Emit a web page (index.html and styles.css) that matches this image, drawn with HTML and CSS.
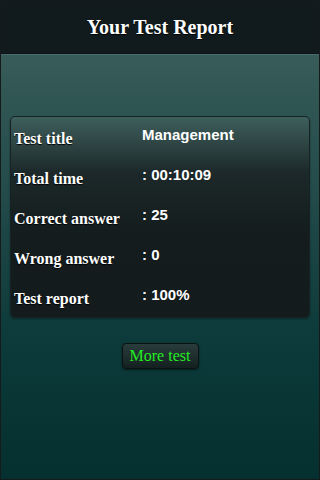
FILE: index.html
```html
<!DOCTYPE html>
<html lang="en">
<head>
    <meta charset="UTF-8">
    <meta name="viewport" content="width=device-width, initial-scale=1.0">
    <title>Your Test Report</title>
    <link rel="stylesheet" href="styles.css">
</head>
<body>
    <div class="page">
        <div class="header">
            <h1>Your Test Report</h1>
        </div>

        <div class="content">
            <div class="report">
                <div class="row">
                    <span class="label">Test title</span>
                    <span class="value">Management</span>
                </div>
                <div class="row">
                    <span class="label">Total time</span>
                    <span class="value">: 00:10:09</span>
                </div>
                <div class="row">
                    <span class="label">Correct answer</span>
                    <span class="value">: 25</span>
                </div>
                <div class="row">
                    <span class="label">Wrong answer</span>
                    <span class="value">: 0</span>
                </div>
                <div class="row">
                    <span class="label">Test report</span>
                    <span class="value">: 100%</span>
                </div>
            </div>

            <div class="actions">
                <button type="button" class="more">More test</button>
            </div>
        </div>
    </div>
</body>
</html>
```

FILE: styles.css
```css
html, body {
    margin: 0;
    padding: 0;
    height: 100%;
}
body {
    background-color: #111;
}
.page {
    box-sizing: border-box;
    height: 480px;
    border: 1px solid #151b1c;
    display: flex;
    flex-direction: column;
    background: linear-gradient(#3f625f, #0d3a3a 70%, #04302f);
}
.header {
    height: 52px;
    background-color: #111b1d;
    border-bottom: 1px solid #0c1213;
    display: flex;
    align-items: center;
    justify-content: center;
}
.header h1 {
    margin: 0;
    font-family: "Liberation Serif", "Times New Roman", serif;
    font-size: 20px;
    font-weight: bold;
    color: #fff;
    text-shadow: 0 1px 1px #000;
}
.content {
    flex: 1;
    padding: 61px 9px 0;
    border-top: 1px solid #4a6e6b;
}
.report {
    border: 1px solid #162325;
    border-radius: 5px;
    background: linear-gradient(#3e5f5c, #1c2829 28%, #141c1d 60%, #141b1c);
    box-shadow: 0 1px 2px rgba(0, 0, 0, 0.4);
}
.row {
    display: grid;
    grid-template-columns: 128px 1fr;
    align-items: center;
    height: 40px;
    padding-left: 3px;
}
.label {
    font-family: "Liberation Serif", "Times New Roman", serif;
    font-size: 16px;
    font-weight: bold;
    color: #fff;
    text-shadow: 0 1px 1px #000;
    padding-top: 3px;
}
.value {
    font-family: "Liberation Sans", Arial, sans-serif;
    font-size: 15px;
    font-weight: bold;
    color: #fff;
    padding-bottom: 5px;
}
.actions {
    display: flex;
    justify-content: center;
    margin-top: 25px;
}
.more {
    height: 26px;
    width: 77px;
    padding: 0;
    font-family: "Liberation Serif", "Times New Roman", serif;
    font-size: 16px;
    color: #22ee22;
    background: linear-gradient(#2a3c3c, #142020);
    border: 1px solid #0b1212;
    border-radius: 4px;
    box-shadow: 0 1px 2px rgba(0, 0, 0, 0.5);
}
```
